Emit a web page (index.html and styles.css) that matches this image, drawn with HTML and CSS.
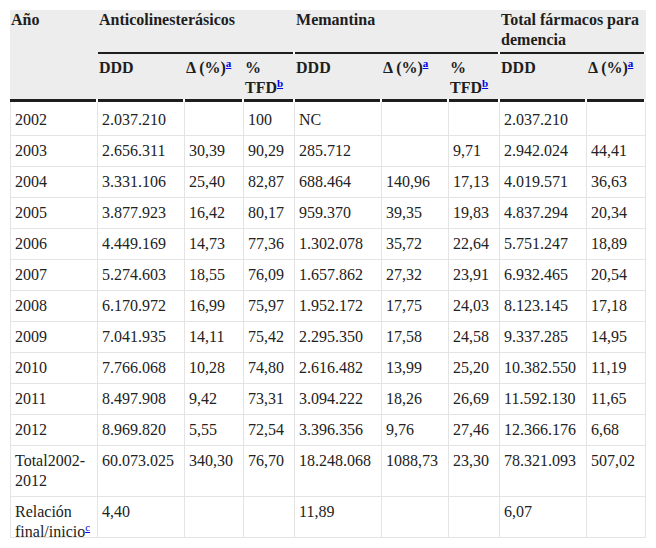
FILE: index.html
```html
<!DOCTYPE html>
<html lang="es">
<head>
<meta charset="utf-8">
<title>Tabla DDD</title>
<link rel="stylesheet" href="styles.css">
</head>
<body>
<div class="wrap">
<table class="data">
<colgroup>
<col class="c-year"><col class="c-ddd"><col class="c-d1"><col class="c-tfd"><col class="c-ddd"><col class="c-d2"><col class="c-tfd"><col class="c-ddd"><col class="c-d1">
</colgroup>
<thead>
<tr>
<th rowspan="2" class="h2 top">Año</th>
<th colspan="3" class="h1">Anticolinesterásicos</th>
<th colspan="3" class="h1">Memantina</th>
<th colspan="2" class="h1">Total fármacos para<br>demencia</th>
</tr>
<tr>
<th class="h2 sub">DDD</th>
<th class="h2 sub">Δ (%)<sup><a href="#a">a</a></sup></th>
<th class="h2 sub">% TFD<sup><a href="#b">b</a></sup></th>
<th class="h2 sub">DDD</th>
<th class="h2 sub">Δ (%)<sup><a href="#a">a</a></sup></th>
<th class="h2 sub">% TFD<sup><a href="#b">b</a></sup></th>
<th class="h2 sub">DDD</th>
<th class="h2 sub">Δ (%)<sup><a href="#a">a</a></sup></th>
</tr>
</thead>
<tbody>
<tr class="first"><td>2002</td><td>2.037.210</td><td></td><td>100</td><td>NC</td><td></td><td></td><td>2.037.210</td><td></td></tr>
<tr><td>2003</td><td>2.656.311</td><td>30,39</td><td>90,29</td><td>285.712</td><td></td><td>9,71</td><td>2.942.024</td><td>44,41</td></tr>
<tr><td>2004</td><td>3.331.106</td><td>25,40</td><td>82,87</td><td>688.464</td><td>140,96</td><td>17,13</td><td>4.019.571</td><td>36,63</td></tr>
<tr><td>2005</td><td>3.877.923</td><td>16,42</td><td>80,17</td><td>959.370</td><td>39,35</td><td>19,83</td><td>4.837.294</td><td>20,34</td></tr>
<tr><td>2006</td><td>4.449.169</td><td>14,73</td><td>77,36</td><td>1.302.078</td><td>35,72</td><td>22,64</td><td>5.751.247</td><td>18,89</td></tr>
<tr><td>2007</td><td>5.274.603</td><td>18,55</td><td>76,09</td><td>1.657.862</td><td>27,32</td><td>23,91</td><td>6.932.465</td><td>20,54</td></tr>
<tr><td>2008</td><td>6.170.972</td><td>16,99</td><td>75,97</td><td>1.952.172</td><td>17,75</td><td>24,03</td><td>8.123.145</td><td>17,18</td></tr>
<tr><td>2009</td><td>7.041.935</td><td>14,11</td><td>75,42</td><td>2.295.350</td><td>17,58</td><td>24,58</td><td>9.337.285</td><td>14,95</td></tr>
<tr><td>2010</td><td>7.766.068</td><td>10,28</td><td>74,80</td><td>2.616.482</td><td>13,99</td><td>25,20</td><td>10.382.550</td><td>11,19</td></tr>
<tr><td>2011</td><td>8.497.908</td><td>9,42</td><td>73,31</td><td>3.094.222</td><td>18,26</td><td>26,69</td><td>11.592.130</td><td>11,65</td></tr>
<tr><td>2012</td><td>8.969.820</td><td>5,55</td><td>72,54</td><td>3.396.356</td><td>9,76</td><td>27,46</td><td>12.366.176</td><td>6,68</td></tr>
<tr><td>Total2002-2012</td><td>60.073.025</td><td>340,30</td><td>76,70</td><td>18.248.068</td><td>1088,73</td><td>23,30</td><td>78.321.093</td><td>507,02</td></tr>
<tr><td>Relación final/inicio<sup><a href="#c" class="plain">c</a></sup></td><td>4,40</td><td></td><td></td><td>11,89</td><td></td><td></td><td>6,07</td><td></td></tr>
</tbody>
</table>
</div>
</body>
</html>
```
FILE: styles.css
```css
html, body {
  margin: 0;
  padding: 0;
  background: #ffffff;
}

.wrap {
  margin: 10px 0 0 10px;
  width: 636px;
  height: 527px;
  overflow: hidden;
  border-bottom: 1px solid #e4e4e4;
}

.data {
  width: 636px;
  table-layout: fixed;
  border-collapse: separate;
  border-spacing: 0;
  font-family: "Liberation Serif", "Times New Roman", serif;
  font-size: 16px;
  line-height: 20px;
  color: #222222;
}

.c-year { width: 88px; }
.c-ddd { width: 87px; }
.c-d1 { width: 59px; }
.c-tfd { width: 51px; }
.c-d2 { width: 67px; }

.data th {
  font-weight: bold;
  text-align: left;
  vertical-align: top;
  color: #1e1e1e;
  background:
    linear-gradient(#1e1e1e, #1e1e1e) left bottom / calc(100% - 2px) var(--lw) no-repeat,
    linear-gradient(#ededed, #ededed) left top / 100% calc(100% - var(--lw)) no-repeat;
}

.data th.h1 {
  --lw: 2px;
  padding: 0 1px 4px 1px;
}

.data th.h2 {
  --lw: 3px;
}

.data th.top {
  padding: 0 1px 3px 1px;
}

.data th.sub {
  padding: 4px 1px 4px 1px;
}

.data sup {
  font-size: 11px;
  line-height: 0;
  vertical-align: 6px;
}

.data sup a {
  color: #0000ee;
  text-decoration: underline;
}

.data td {
  text-align: left;
  vertical-align: top;
  padding: 5px 3px 5px 4px;
  border-right: 1px solid #e4e4e4;
  border-bottom: 1px solid #e4e4e4;
}

.data td:first-child {
  border-left: 1px solid #e4e4e4;
}

.data tr.first td {
  padding-top: 8px;
}
```
